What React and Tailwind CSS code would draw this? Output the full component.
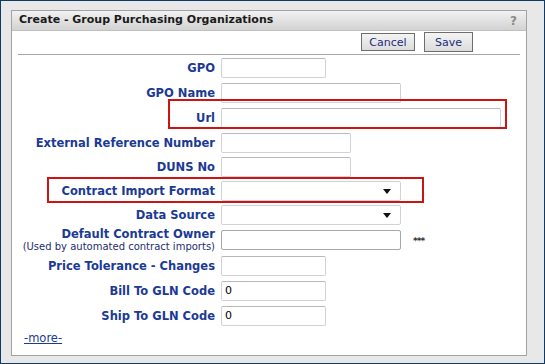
import React from 'react';

const font = { fontFamily: '"DejaVu Sans", Verdana, sans-serif' };

function TextBox({ w, value = '', dark = false }) {
  return (
    <div
      className={`h-[20px] ${w} rounded-[2px] border bg-white pl-[3px] flex items-center text-[11px] text-black ${
        dark ? 'border-[#a8a8a8]' : 'border-[#cfd3d8] border-t-[#b5b8bc]'
      }`}
    >
      {value}
    </div>
  );
}

function Select({ w }) {
  return (
    <div className={`h-[20px] ${w} rounded-[2px] border border-[#cfd3d8] bg-white flex items-center justify-end pr-[9px]`}>
      <svg width="8" height="5" viewBox="0 0 8 5">
        <path d="M0 0h8L4 5z" fill="#111" />
      </svg>
    </div>
  );
}

function Row({ label, sub, mt, children, after }) {
  return (
    <div className={`flex items-center ${mt}`}>
      <div className="w-[203px] text-right leading-[12px]">
        <div className="text-[11.5px] font-bold text-[#1b3a95]">{label}</div>
        {sub && <div className="text-[10px] text-[#1e2e6e] leading-[11px] mt-[1px]">{sub}</div>}
      </div>
      <div className="ml-[6px]">{children}</div>
      {after}
    </div>
  );
}

export default function App() {
  return (
    <div style={font} className="w-[545px] h-[364px] bg-[#e8e8e8] border border-[#0e3a66] pl-[10px] pt-[9px] pr-[17px]">
      <div className="h-[346px] border border-[#a3a3a3] bg-white flex flex-col">
        <div className="h-[20px] bg-gradient-to-b from-[#f2f2f2] to-[#d2d2d2] border-b border-[#c0c0c0] flex items-center justify-between px-[7px]">
          <span className="text-[11px] font-bold text-[#1a1a1a]">Create - Group Purchasing Organizations</span>
          <span className="text-[12px] font-bold text-[#8a8a8a] mr-[2px]">?</span>
        </div>

        <div className="flex justify-end items-center gap-[9px] pr-[53px] pt-[1px]">
          <button className="h-[18px] w-[54px] border border-[#6e6e6e] bg-gradient-to-b from-[#f4f4f4] to-[#dcdcdc] text-[11px] text-[#1c2c7c] leading-none">
            Cancel
          </button>
          <button className="h-[20px] w-[49px] border border-[#6e6e6e] bg-gradient-to-b from-[#f4f4f4] to-[#dcdcdc] text-[11px] text-[#1c2c7c] leading-none">
            Save
          </button>
        </div>
        <div className="mx-[6px] mt-[2px] h-px bg-[#a6a6a6]" />

        <div className="flex flex-col">
          <Row label="GPO" mt="mt-[3px]">
            <TextBox w="w-[105px]" />
          </Row>
          <Row label="GPO Name" mt="mt-[5px]">
            <TextBox w="w-[180px]" />
          </Row>
          <div className="relative">
            <div className="absolute left-[156px] top-[-4px] w-[339px] h-[30px] border-2 border-[#cc1414] z-10 pointer-events-none" />
            <Row label="Url" mt="mt-[5px]">
              <TextBox w="w-[280px]" />
            </Row>
          </div>
          <Row label="External Reference Number" mt="mt-[5px]">
            <TextBox w="w-[130px]" />
          </Row>
          <Row label="DUNS No" mt="mt-[4px]">
            <TextBox w="w-[130px]" />
          </Row>
          <div className="relative">
            <div className="absolute left-[35px] top-[0px] w-[377px] h-[26px] border-2 border-[#cc1414] z-10 pointer-events-none" />
            <Row label="Contract Import Format" mt="mt-[4px]">
              <Select w="w-[180px]" />
            </Row>
          </div>
          <Row label="Data Source" mt="mt-[4px]">
            <Select w="w-[180px]" />
          </Row>
          <Row
            label="Default Contract Owner"
            sub="(Used by automated contract imports)"
            mt="mt-[3px]"
            after={<span className="ml-[12px] mt-[3px] text-[9px] font-bold text-[#333] tracking-[-1px]">***</span>}
          >
            <TextBox w="w-[180px]" dark />
          </Row>
          <Row label="Price Tolerance - Changes" mt="mt-[4px]">
            <TextBox w="w-[105px]" />
          </Row>
          <Row label="Bill To GLN Code" mt="mt-[5px]">
            <TextBox w="w-[105px]" value="0" />
          </Row>
          <Row label="Ship To GLN Code" mt="mt-[5px]">
            <TextBox w="w-[105px]" value="0" />
          </Row>
          <div className="mt-[5px] pl-[12px] leading-[12px]">
            <a href="#" className="text-[11.5px] text-[#1b3a95] underline">-more-</a>
          </div>
        </div>
      </div>
    </div>
  );
}
